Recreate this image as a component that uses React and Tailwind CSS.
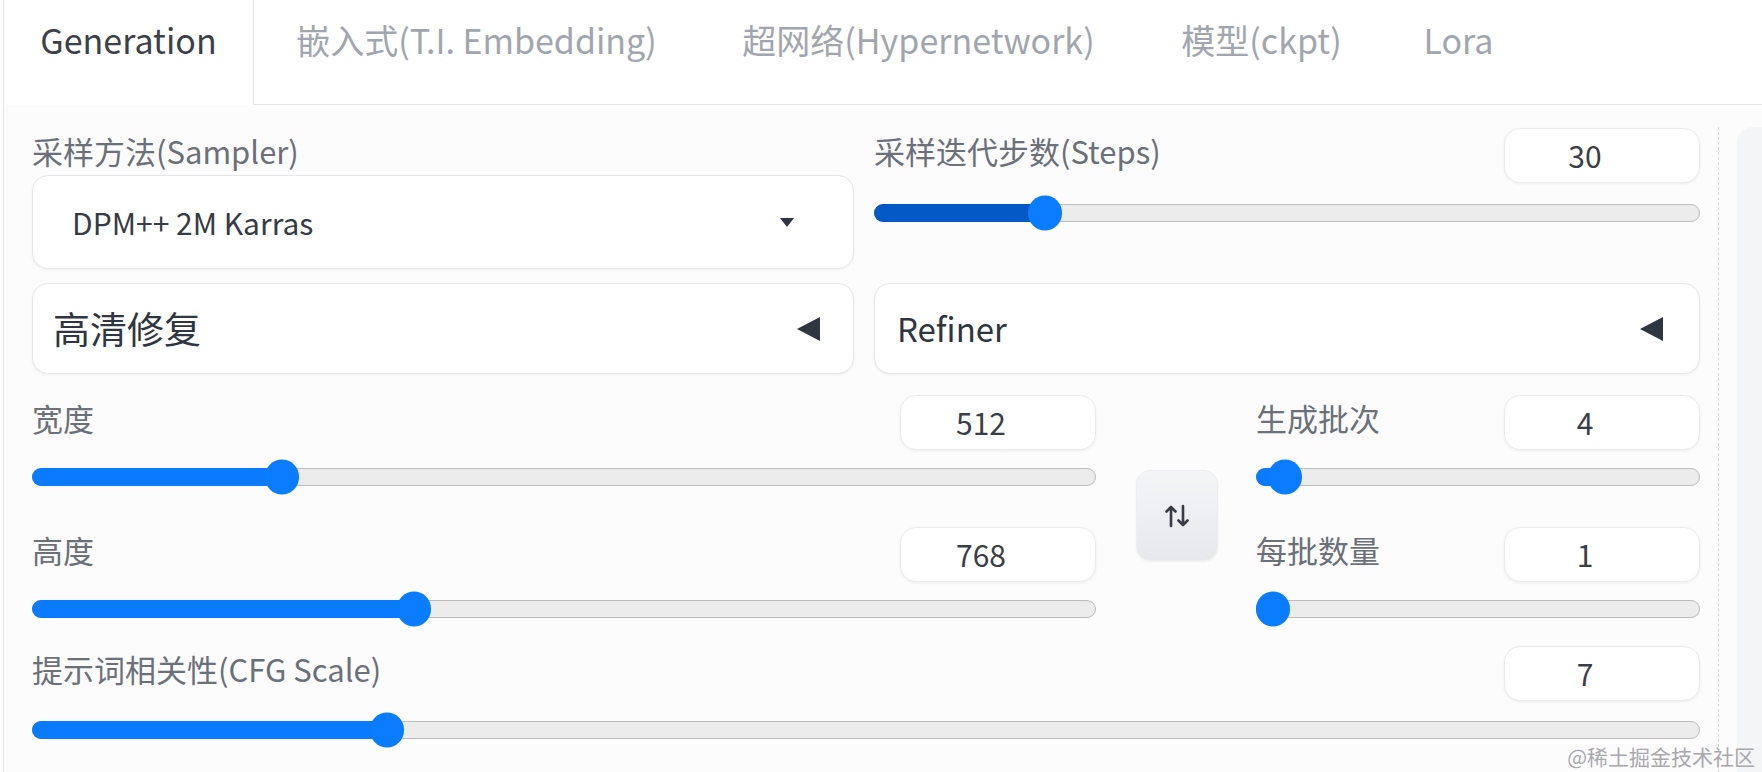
import React from 'react';

const tabs = [
    { label: '嵌入式(T.I. Embedding)', width: 'w-[445px] justify-center' },
    { label: '超网络(Hypernetwork)', width: 'w-[439px] justify-center' },
    { label: '模型(ckpt)', width: 'w-[247px] justify-center' },
    { label: 'Lora', width: 'w-[147px] justify-center' },
];

// native-range style slider: thumb centre moves between r and width - r
const Slider = ({ value, min, max, fill = 'bg-[#0a7aff]' }) => {
    const p = (value - min) / (max - min);
    const center = `calc(17px + ${p} * (100% - 34px))`;
    return (
        <div className="relative h-[18px] w-full">
            <div className="h-full w-full rounded-full border border-[#bcbcbc] bg-[#ececec]" />
            <div className={`absolute left-0 top-0 h-full rounded-full ${fill}`} style={{ width: center }} />
            <div
                className="absolute top-1/2 h-[35px] w-[34px] -translate-x-1/2 -translate-y-1/2 rounded-full bg-[#0a7cff]"
                style={{ left: center }}
            />
        </div>
    );
};

const NumberBox = ({ value }) => (
    <div className="flex h-[55px] w-[196px] items-center justify-center rounded-[16px] border border-[#ececee] bg-white pr-[34px] text-[30px] text-[#3a3f47] shadow-[0_1px_3px_rgba(0,0,0,0.06)]">
        {value}
    </div>
);

const SliderBlock = ({ label, value, min, max, fill, sliderH = 'h-[54px]' }) => (
    <div>
        <div className="flex items-start justify-between">
            <span className="mt-[3px] text-[31px] leading-[40px] text-[#6b7079]">{label}</span>
            <NumberBox value={value} />
        </div>
        <div className={`flex items-center ${sliderH}`}>
            <Slider value={value} min={min} max={max} fill={fill} />
        </div>
    </div>
);

const LeftTriangle = () => (
    <svg width="25" height="26" viewBox="0 0 25 26">
        <path d="M24 1 L1 13 L24 25 Z" fill="#2f3541" />
    </svg>
);

const Accordion = ({ children, className }) => (
    <div className={`flex h-[91px] items-center justify-between rounded-[16px] border border-[#e7e7ea] bg-white text-[#2f3541] shadow-[0_1px_3px_rgba(0,0,0,0.05)] ${className}`}>
        {children}
        <LeftTriangle />
    </div>
);

const SwapIcon = () => (
    <svg width="30" height="24" viewBox="0 0 30 24" fill="none" stroke="#383c44" strokeWidth="2.6" strokeLinecap="round" strokeLinejoin="round">
        <path d="M9 22V3M4.5 7.5L9 3l4.5 4.5" />
        <path d="M21 2v19M16.5 16.5L21 21l4.5-4.5" />
    </svg>
);

const App = () => {
    return (
        <div className="relative flex h-[772px] w-[1762px] overflow-hidden bg-white font-['Noto_Sans_CJK_SC','Noto_Sans',sans-serif]">
            <div className="w-[3px] shrink-0" />
            <div className="flex flex-1 flex-col border-l border-[#e5e7eb]">
                {/* Tabs */}
                <div className="flex h-[105px] shrink-0 items-stretch">
                    <div className="flex w-[250px] justify-center border-r border-[#e3e5e8] bg-white pt-[18px] text-[34px] leading-[44px] text-[#3c4049]">
                        Generation
                    </div>
                    {tabs.map(t => (
                        <div key={t.label} className={`flex border-b border-[#e3e5e8] pt-[18px] text-[34px] leading-[44px] text-[#a1a6ae] ${t.width}`}>
                            {t.label}
                        </div>
                    ))}
                    <div className="flex-1 border-b border-[#e3e5e8]" />
                </div>

                {/* Body */}
                <div className="flex flex-1 bg-[#fcfcfd]">
                    <div className="w-[1714px] shrink-0 pl-[28px] pr-[18px] pt-[23px]">
                        {/* Sampler + Steps */}
                        <div className="grid grid-cols-[822px_826px] gap-x-[20px]">
                            <div>
                                <div className="mt-[3px] text-[31px] leading-[40px] text-[#6b7079]">采样方法(Sampler)</div>
                                <div className="mt-[4px] flex h-[94px] items-center justify-between rounded-[16px] border border-[#e7e7ea] bg-white pl-[39px] pr-[59px] shadow-[0_1px_3px_rgba(0,0,0,0.05)]">
                                    <span className="text-[30px] text-[#363b44]">DPM++ 2M Karras</span>
                                    <svg width="14" height="9" viewBox="0 0 14 9">
                                        <path d="M0 0 H14 L7 9 Z" fill="#2f3541" />
                                    </svg>
                                </div>
                            </div>
                            <SliderBlock label="采样迭代步数(Steps)" value={30} min={1} max={150} fill="bg-[#0459c6]" sliderH="h-[60px]" />
                        </div>

                        {/* Hires fix + Refiner */}
                        <div className="mt-[14px] grid grid-cols-[822px_826px] gap-x-[20px]">
                            <Accordion className="pl-[20px] pr-[32px]">
                                <span className="text-[37px]">高清修复</span>
                            </Accordion>
                            <Accordion className="pl-[22px] pr-[35px]">
                                <span className="text-[33px]">Refiner</span>
                            </Accordion>
                        </div>

                        {/* Size + batch */}
                        <div className="mt-[21px] flex items-center">
                            <div className="w-[1064px] shrink-0">
                                <SliderBlock label="宽度" value={512} min={64} max={2048} />
                                <div className="mt-[23px]">
                                    <SliderBlock label="高度" value={768} min={64} max={2048} />
                                </div>
                            </div>
                            <div className="ml-[40px] flex h-[91px] w-[82px] shrink-0 items-center justify-center rounded-[14px] border border-[#eceef1] bg-linear-to-b from-[#f4f5f7] to-[#e6e8ec] shadow-[0_1px_2px_rgba(0,0,0,0.05)]">
                                <SwapIcon />
                            </div>
                            <div className="ml-[38px] flex-1">
                                <SliderBlock label="生成批次" value={4} min={1} max={100} />
                                <div className="mt-[23px]">
                                    <SliderBlock label="每批数量" value={1} min={1} max={8} />
                                </div>
                            </div>
                        </div>

                        {/* CFG */}
                        <div className="mt-[10px]">
                            <SliderBlock label="提示词相关性(CFG Scale)" value={7} min={1} max={30} sliderH="h-[58px]" />
                        </div>
                    </div>
                    <div className="mt-[22px] border-l border-dashed border-[#d6d7db]" />
                    <div className="ml-[18px] mt-[22px] flex-1 rounded-tl-[16px] bg-[#f4f5f7]" />
                </div>
            </div>

            <div className="absolute bottom-[5px] right-[7px] text-[21px] leading-none text-[#a9a9ad]">@稀土掘金技术社区</div>
        </div>
    );
};

export default App;
